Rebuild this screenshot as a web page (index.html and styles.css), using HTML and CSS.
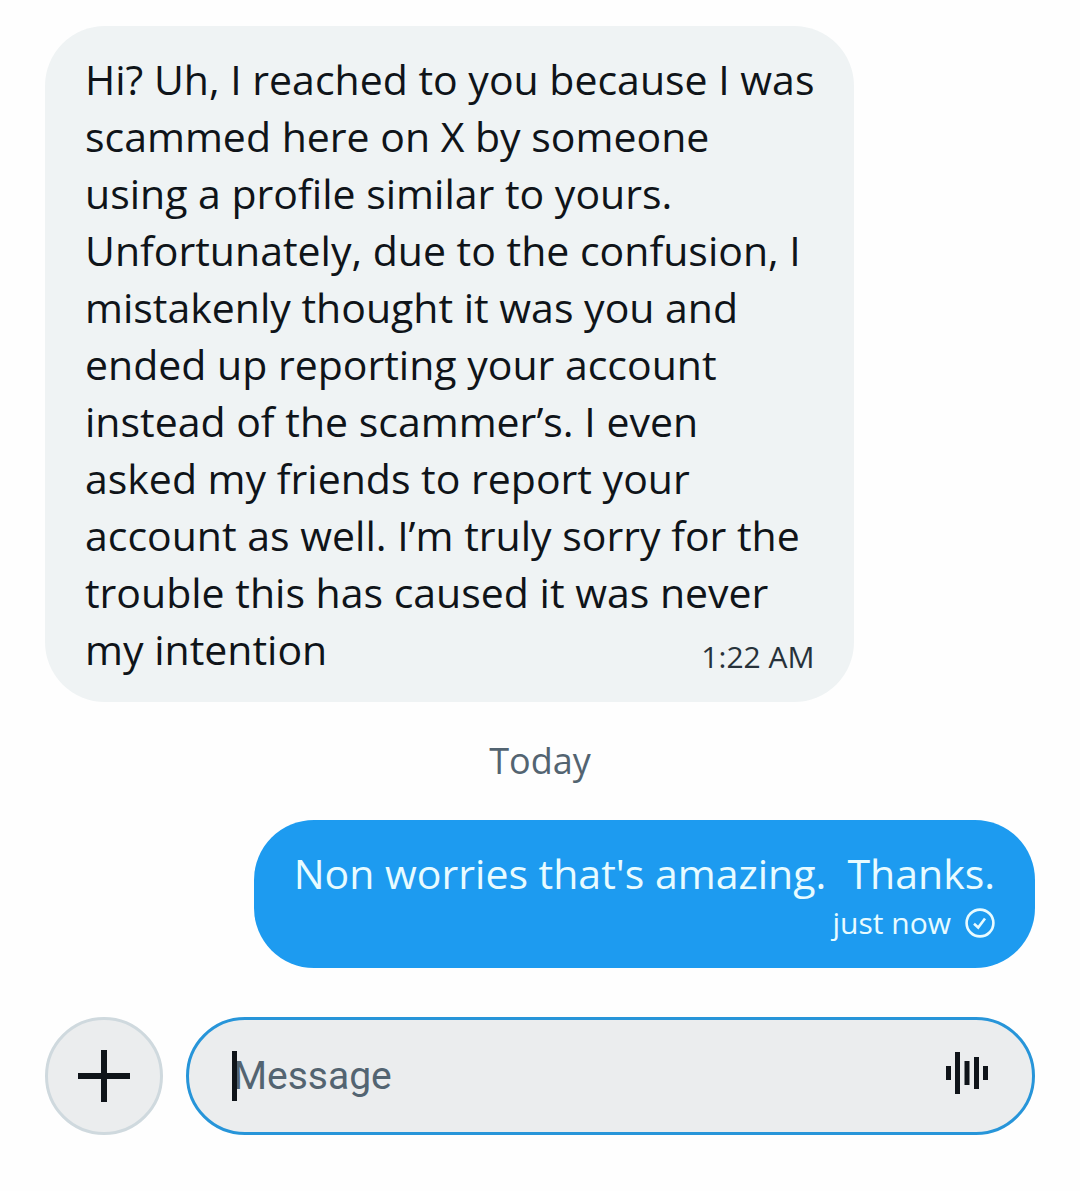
FILE: index.html
```html
<!DOCTYPE html>
<html lang="en">
<head>
    <meta charset="UTF-8">
    <meta name="viewport" content="width=device-width, initial-scale=1.0">
    <title>Messages</title>
    <link rel="stylesheet" href="styles.css">
</head>
<body>
    <main class="chat">
        <div class="message received">
            <p class="text">Hi? Uh, I reached to you because I was<br>
            scammed here on X by someone<br>
            using a profile similar to yours.<br>
            Unfortunately, due to the confusion, I<br>
            mistakenly thought it was you and<br>
            ended up reporting your account<br>
            instead of the scammer’s. I even<br>
            asked my friends to report your<br>
            account as well. I’m truly sorry for the<br>
            trouble this has caused it was never<br>
            my intention</p>
            <time class="time">1:22 AM</time>
        </div>

        <div class="day">Today</div>

        <div class="message sent">
            <p class="text">Non worries that's amazing.&nbsp; Thanks.</p>
            <div class="meta">
                <span>just now</span>
                <svg class="check" viewBox="0 0 30 30" fill="none" stroke="currentColor" stroke-width="2.6">
                    <circle cx="15" cy="15" r="13.4"/>
                    <path d="M9 15.800l4.200 3.700 6.800-9"/>
                </svg>
            </div>
        </div>
    </main>

    <form class="composer">
        <button type="button" class="add" aria-label="Add attachment">
            <svg viewBox="0 0 52 52" fill="currentColor">
                <path d="M23 0h6v23h23v6H29v23h-6V29H0v-6h23z"/>
            </svg>
        </button>
        <div class="field">
            <span class="caret"></span>
            <input type="text" name="message" placeholder="Message" aria-label="Message">
            <button type="button" class="voice" aria-label="Record voice message">
                <svg viewBox="0 0 42 42" fill="currentColor">
                    <path d="M0 14h5v14H0zM9 0h5v42H9zM18.500 9h5v24h-5zM28 5h5v32h-5zM37 14h5v14h-5z"/>
                </svg>
            </button>
        </div>
    </form>
</body>
</html>
```
FILE: styles.css
```css
* {
    margin: 0;
    padding: 0;
    box-sizing: border-box;
}

body {
    font-family: "Open Sans", "Noto Sans", sans-serif;
    background: #fefefe;
    color: #0f1419;
    padding: 26px 45px;
}

.chat {
    display: flex;
    flex-direction: column;
}

.message {
    padding: 25px 40px 24px;
    border-radius: 60px;
}

.text {
    font-size: 41px;
    line-height: 57px;
    white-space: nowrap;
}

.received {
    align-self: flex-start;
    display: grid;
    background: #eff3f4;
}

.received .text,
.received .time {
    grid-area: 1 / 1;
}

.time {
    place-self: end;
    font-size: 30px;
    line-height: 42px;
    color: #27323a;
}

.day {
    padding: 32px 0;
    text-align: center;
    font-size: 36px;
    line-height: 54px;
    color: #536471;
}

.sent {
    align-self: flex-end;
    background: #1d9bf0;
    color: #e8fbff;
}

.meta {
    display: flex;
    align-items: center;
    justify-content: flex-end;
    gap: 14px;
    font-size: 30px;
    line-height: 42px;
}

.check {
    width: 30px;
    height: 30px;
}

.composer {
    display: flex;
    gap: 23px;
    margin-top: 49px;
}

button {
    border: none;
    background: none;
    color: #0f1419;
    cursor: pointer;
}

svg {
    display: block;
}

.composer .add {
    display: flex;
    align-items: center;
    justify-content: center;
    width: 118px;
    height: 118px;
    border: 3px solid #cfd9de;
    border-radius: 50%;
    background: #ebedee;
}

.add svg {
    width: 52px;
    height: 52px;
}

.field {
    position: relative;
    flex: 1;
    display: flex;
    align-items: center;
    height: 118px;
    padding: 0 44px;
    border: 3px solid #2795d9;
    border-radius: 60px;
    background: #ebedee;
}

.field input {
    flex: 1;
    min-width: 0;
    border: none;
    outline: none;
    background: none;
    font-family: Roboto, sans-serif;
    font-size: 39px;
    color: #0f1419;
}

.field input::placeholder {
    color: #536471;
    opacity: 1;
}

/* text cursor at the start of the field */
.caret {
    position: absolute;
    left: 43px;
    top: 31px;
    width: 5px;
    height: 50px;
    background: #0f1419;
}

.voice {
    padding-bottom: 6px;
}

.voice svg {
    width: 42px;
    height: 42px;
}
```
